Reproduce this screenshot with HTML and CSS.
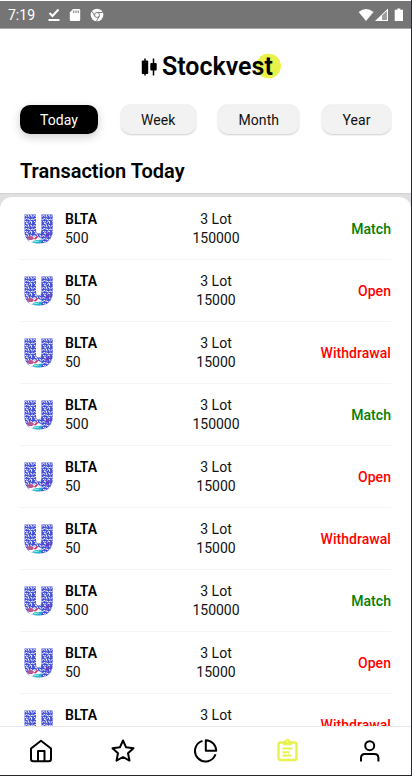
FILE: index.html
```html
<!DOCTYPE html>
<html lang="en">
<head>
<meta charset="utf-8">
<title>Stockvest</title>
<link rel="stylesheet" href="styles.css">
</head>
<body>
<svg class="defs" width="0" height="0" aria-hidden="true">
  <defs>
    <pattern id="swirls" width="9" height="10" patternUnits="userSpaceOnUse">
      <path d="M0 2.2q1.5-1.6 3 0M4 .5l1 2.5M6.5 1q2 .2 1.6 2M.6 5.5l2-1M3.6 5q1.8-1 2.4 1M7 5.6l2-.6M1 7.2q1 2 2.6.6M5 8.6l1.6-1.4M7.6 7.4v2M2.2 9.7l1.2-.2" fill="none" stroke="#fff" stroke-width=".95" stroke-linecap="round"/>
    </pattern>
    <clipPath id="u-shape"><path d="M.5 .5H12V16q0 3.500 2.700 3.500t2.700-3.500V.5H28.700V17Q28.500 29.500 14.500 29.500T.5 17Z"/></clipPath>
    <symbol id="logo" viewBox="0 0 29 30">
      <g clip-path="url(#u-shape)">
        <path fill="#4350d6" d="M0 0h29v30H0z"/>
        <path fill="url(#swirls)" d="M0 0h29v30H0z"/>
        <path fill="#6a3cc8" d="M22 19l4-1-1 4-3 1z"/>
        <path fill="#fff" d="M4 23.500 8 22l7 1 3 2-3 5H5z"/>
        <ellipse cx="6.500" cy="24" rx="3.200" ry="2" fill="#b5568f"/>
        <path fill="#d52c64" d="M9.500 25l3.500-3 1.500.7-3 2.800z"/>
        <path fill="#22b9cb" d="M8 28.200q2-2.400 6-2.200l4-.5-1 3.500-4 1z"/>
        <path d="M10 27.800l5-.8" stroke="#fff" stroke-width=".6"/>
      </g>
    </symbol>
  </defs>
</svg>
<div class="screen">
  <header class="status">
    <span class="clock">7:19</span>
    <svg class="s-check" width="12" height="14" viewBox="0 0 12 14"><path d="M1.500 5 4.500 8 10.500 1.500" fill="none" stroke="#fff" stroke-width="2"/><path d="M.5 11h11v2H.5z" fill="#fff"/></svg>
    <svg class="s-card" width="12" height="14" viewBox="0 0 12 14"><path d="M4 1h6q1.200 0 1.200 1.200v9.600q0 1.200-1.200 1.200H2Q.8 13 .8 11.800V4.500z" fill="#fff"/><path d="M4.800 2.500V5M7 2.500V5M9.200 2.500V5" stroke="#757575"/></svg>
    <svg class="s-chrome" width="14" height="14" viewBox="0 0 14 14"><circle cx="7" cy="7" r="6.300" fill="#fff"/><circle cx="7" cy="7" r="2.500" fill="none" stroke="#757575" stroke-width=".9"/><path d="M7 4.500h5.700M4.800 8.200 2 3.300M9.200 8.200 6.500 13" stroke="#757575" stroke-width=".9"/></svg>
    <svg class="s-signals" width="46" height="14" viewBox="0 0 46 14"><path d="M.7 4Q8 -2 15.500 4L8 13z" fill="#fff"/><path d="M17 13 30 .5V13z" fill="#fff"/><path d="M24 7.500 28.900 3v9H24z" fill="#757575"/><path d="M24 7.500 28.900 3v9H24z" fill="#fff" opacity=".3"/><path d="M39.300.5h3v1.300H45V13h-8.300V1.800h2.600z" fill="#fff"/></svg>
  </header>
  <div class="brand">
    <svg class="candles" width="16" height="18" viewBox="0 0 16 18"><path d="M4 .5v17M12.500.5v17" stroke="#000" stroke-width="1.500"/><rect x=".8" y="2.500" width="6.400" height="13.500" rx=".8"/><rect x="9.300" y="5" width="6.400" height="7.500" rx="1"/></svg>
    <h1>Stockvest</h1>
  </div>
  <nav class="filters">
    <button class="chip today">Today</button><button class="chip week">Week</button><button class="chip month">Month</button><button class="chip year">Year</button>
  </nav>
  <h2>Transaction Today</h2>
  <main class="well"><ul class="list">
    <li><svg class="logo"><use href="#logo"/></svg><div class="stock"><b>BLTA</b><span>500</span></div><div class="lot"><span>3 Lot</span><span>150000</span></div><strong class="match">Match</strong></li>
    <li><svg class="logo"><use href="#logo"/></svg><div class="stock"><b>BLTA</b><span>50</span></div><div class="lot"><span>3 Lot</span><span>15000</span></div><strong>Open</strong></li>
    <li><svg class="logo"><use href="#logo"/></svg><div class="stock"><b>BLTA</b><span>50</span></div><div class="lot"><span>3 Lot</span><span>15000</span></div><strong>Withdrawal</strong></li>
    <li><svg class="logo"><use href="#logo"/></svg><div class="stock"><b>BLTA</b><span>500</span></div><div class="lot"><span>3 Lot</span><span>150000</span></div><strong class="match">Match</strong></li>
    <li><svg class="logo"><use href="#logo"/></svg><div class="stock"><b>BLTA</b><span>50</span></div><div class="lot"><span>3 Lot</span><span>15000</span></div><strong>Open</strong></li>
    <li><svg class="logo"><use href="#logo"/></svg><div class="stock"><b>BLTA</b><span>50</span></div><div class="lot"><span>3 Lot</span><span>15000</span></div><strong>Withdrawal</strong></li>
    <li><svg class="logo"><use href="#logo"/></svg><div class="stock"><b>BLTA</b><span>500</span></div><div class="lot"><span>3 Lot</span><span>150000</span></div><strong class="match">Match</strong></li>
    <li><svg class="logo"><use href="#logo"/></svg><div class="stock"><b>BLTA</b><span>50</span></div><div class="lot"><span>3 Lot</span><span>15000</span></div><strong>Open</strong></li>
    <li><svg class="logo"><use href="#logo"/></svg><div class="stock"><b>BLTA</b><span>50</span></div><div class="lot"><span>3 Lot</span><span>15000</span></div><strong>Withdrawal</strong></li>
  </ul></main>
  <nav class="tabs">
    <a><svg viewBox="0 0 26 26"><path d="M3 10.500 13 2.800 23 10.500V21q0 2.300-2.300 2.300H5.300Q3 23.300 3 21zM10 23V13h6.500V23"/></svg></a>
    <a><svg viewBox="0 0 26 26"><path d="M13 2.500l3.100 6.800 7.400.9-5.500 5 1.500 7.400L13 19l-6.500 3.600L8 15.200l-5.500-5 7.400-.9z"/></svg></a>
    <a><svg viewBox="0 0 26 26"><path d="M9.500 2.900A10.500 10.500 0 1 0 22.500 16.200M12.800 2.300V12.800H23.200A10.500 10.500 0 0 0 12.800 2.300z"/></svg></a>
    <a class="active"><svg viewBox="0 0 26 26"><path d="M5.500 4.500h14q2 0 2 2V20q0 2-2 2h-14q-2 0-2-2V6.500q0-2 2-2z" stroke-width="2.400"/><path d="M8.500 3.300h2a2 2 0 0 1 4 0h2v3.500h-8z" fill="currentColor" stroke-width="1"/><path d="M7.500 10.500h10M7.500 14.200h7M7.500 17.500h9" stroke-width="2"/><circle cx="12.500" cy="3.600" r=".8" fill="#fff" stroke="none"/></svg></a>
    <a><svg viewBox="0 0 26 26"><circle cx="12.700" cy="7.700" r="4.500"/><path d="M4 23.500V20q0-4 4-4h9.400q4 0 4 4v3.500"/></svg></a>
  </nav>
</div>
</body>
</html>
```
FILE: styles.css
```css
* { box-sizing: border-box; }
body { margin: 0; background: #26272b; font-family: Roboto, sans-serif; color: #111; }
.defs { position: absolute; }
.screen { width: 411px; height: 775px; margin-bottom: 1px; padding-top: 1px; background: #fff; display: flex; flex-direction: column; overflow: hidden; }
.status { height: 28px; flex: none; background: #757575; border-bottom: 1px solid #aaa; display: flex; align-items: center; padding-left: 8px; color: #fff; }
.clock { width: 40px; font-size: 14px; }
.s-card { margin-left: 9px; }
.s-chrome { margin-left: 9px; }
.s-signals { margin-left: auto; margin-right: 7px; }
.brand { height: 76px; flex: none; display: flex; align-items: center; padding-left: 141px; }
h1 { margin: 0 0 0 5px; font-size: 25px; line-height: 30px; font-weight: 600; color: #000; background: radial-gradient(circle at 106.500px 14px, #e8f24b 12px, transparent 12.700px); padding-right: 12px; }
.candles { margin-top: -1px; }
.filters { height: 31px; flex: none; display: flex; justify-content: space-between; padding: 0 20px; }
.chip { height: 29px; border: 0; border-radius: 10px; background: #f2f2f2; color: #111; font: 14px Roboto, sans-serif; letter-spacing: .1px; padding: 0; box-shadow: 0 .5px 2px #0003; }
.today { width: 78px; background: #000; color: #fff; box-shadow: 0 3px 10px #0003; }
.week { width: 75px; }
.month { width: 81px; }
.year { width: 69px; }
h2 { margin: 0; height: 57px; flex: none; padding: 22px 20px 0; font-size: 20px; line-height: 26px; font-weight: 600; color: #000; }
.well { flex: 1; min-height: 0; overflow: hidden; background: #e0e0e0; padding-top: 4px; box-shadow: inset 0 1px 1px #0001; }
.list { margin: 0; padding: 1px 20px 0; list-style: none; background: #fff; border-radius: 12px 12px 0 0; }
.list li { height: 62px; border-bottom: 1px solid #f0f5f6; display: grid; grid-template-columns: 45px 93px 1fr 117px; align-items: center; font-size: 14px; line-height: 19px; }
.logo { width: 29px; height: 30px; margin-left: 4px; }
.stock, .lot { display: flex; flex-direction: column; }
.stock b { font-weight: 600; color: #000; }
.lot { align-items: center; }
.list strong { font-weight: 500; text-align: right; color: #f00; padding-top: 1px; letter-spacing: .05px; }
.list .match { color: #008000; }
.tabs { height: 49px; flex: none; border-top: 1px solid #e8e8e8; display: flex; align-items: center; }
.tabs a { flex: 1; display: flex; justify-content: center; color: #000; }
.tabs svg { width: 26px; height: 26px; fill: none; stroke: currentColor; stroke-width: 2; stroke-linejoin: round; }
.tabs .active { color: #e8f24b; }
```
